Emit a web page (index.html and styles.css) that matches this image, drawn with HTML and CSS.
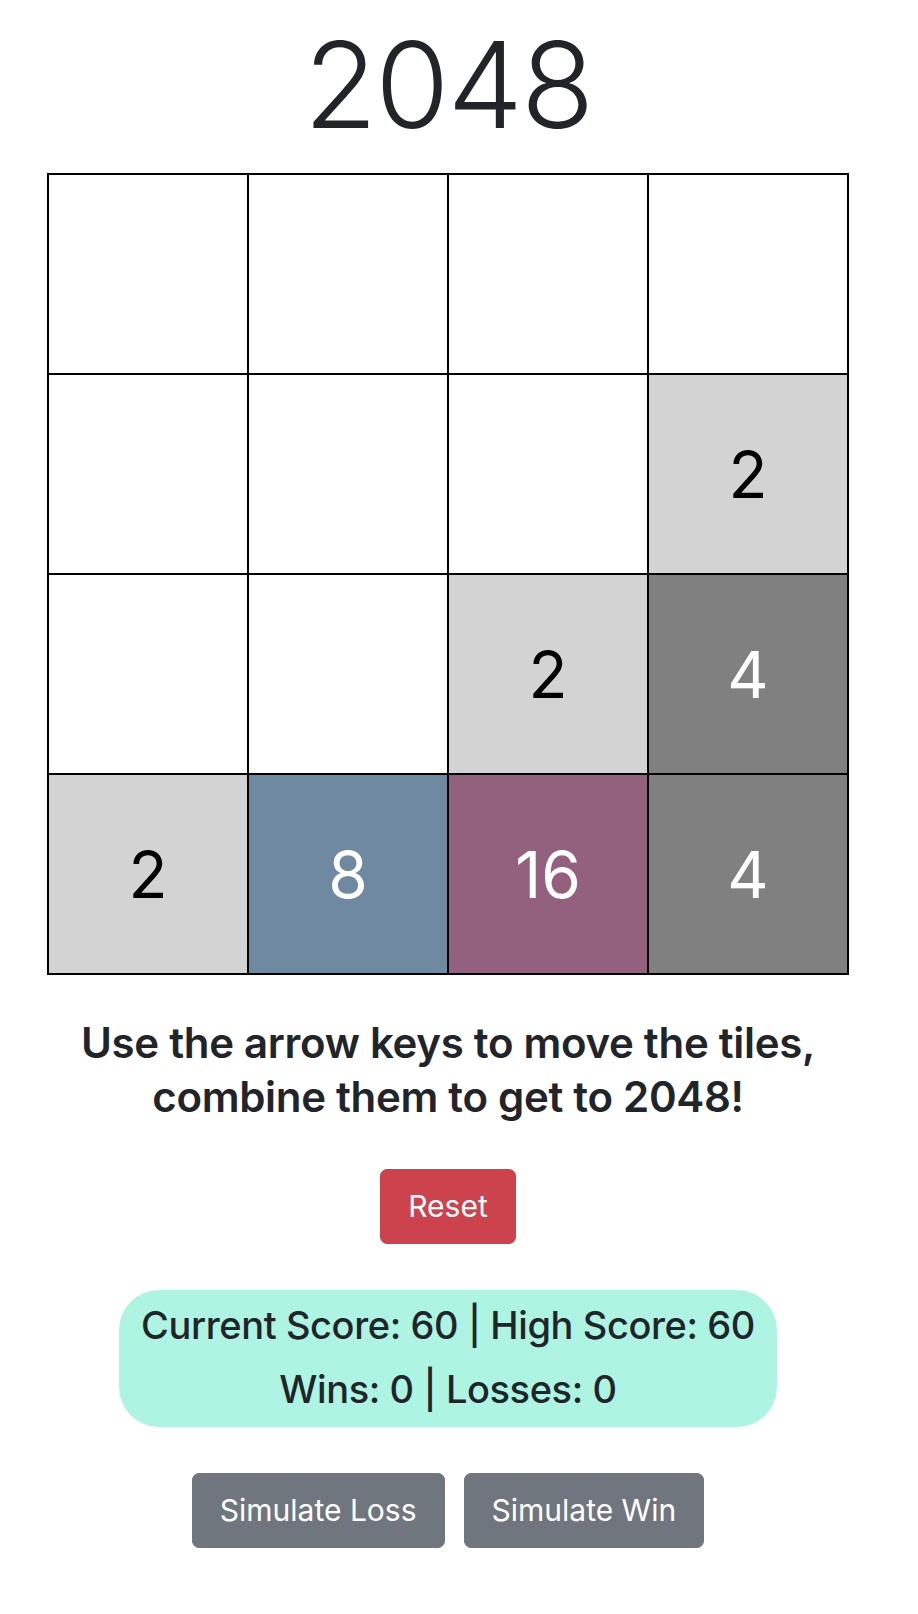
FILE: index.html
```html
<!DOCTYPE html>
<html lang="en">
<head>
<meta charset="utf-8">
<title>2048</title>
<link rel="stylesheet" href="styles.css">
</head>
<body>
<main class="page">
  <h1 class="title">2048</h1>
  <div class="board">
    <div class="cell"></div>
    <div class="cell"></div>
    <div class="cell"></div>
    <div class="cell"></div>
    <div class="cell"></div>
    <div class="cell"></div>
    <div class="cell"></div>
    <div class="cell t2">2</div>
    <div class="cell"></div>
    <div class="cell"></div>
    <div class="cell t2">2</div>
    <div class="cell t4">4</div>
    <div class="cell t2">2</div>
    <div class="cell t8">8</div>
    <div class="cell t16">16</div>
    <div class="cell t4">4</div>
  </div>
  <p class="hint">Use the arrow keys to move the tiles,<br>combine them to get to 2048!</p>
  <button class="btn btn-danger">Reset</button>
  <div class="score">
    <p class="score-line">Current Score: 60 | High Score: 60</p>
    <p class="score-line">Wins: 0 | Losses: 0</p>
  </div>
  <div class="actions">
    <button class="btn btn-secondary">Simulate Loss</button>
    <button class="btn btn-secondary">Simulate Win</button>
  </div>
</main>
</body>
</html>
```
FILE: styles.css
```css
html, body {
  margin: 0;
  padding: 0;
  background: #ffffff;
}
body {
  font-family: Inter, "Noto Sans", "Liberation Sans", sans-serif;
  color: #212529;
}
.page {
  width: 896px;
  display: flex;
  flex-direction: column;
  align-items: center;
}
.title {
  margin: 13px 0 0 0;
  font-size: 120px;
  line-height: 144px;
  font-weight: 300;
  letter-spacing: -2px;
}
.board {
  margin-top: 16px;
  display: grid;
  grid-template-columns: repeat(4, 200px);
  grid-template-rows: repeat(4, 200px);
  border: 1px solid #000;
}
.cell {
  border: 1px solid #000;
  background: #fff;
  display: flex;
  align-items: center;
  justify-content: center;
  font-size: 64px;
  font-weight: 400;
  color: #000;
}
.t2 { background: #d3d3d3; color: #000; }
.t4 { background: #808080; color: #fff; }
.t8 { background: #6e89a0; color: #fff; }
.t16 { background: #93617e; color: #fff; }
.hint {
  margin: 41px 0 0 0;
  font-size: 42px;
  line-height: 54px;
  font-weight: 600;
  text-align: center;
  letter-spacing: -0.3px;
}
.btn {
  font-family: inherit;
  font-size: 30px;
  line-height: 45px;
  font-weight: 400;
  color: #fff;
  padding: 14px 27px;
  border: 1px solid transparent;
  border-radius: 7px;
  cursor: pointer;
}
.btn-danger {
  margin-top: 45px;
  background: #cd434d;
  border-color: #cd434d;
}
.btn-secondary {
  background: #70767e;
  border-color: #70767e;
}
.score {
  margin-top: 46px;
  width: 658px;
  box-sizing: border-box;
  padding: 3px 10px 6px;
  background: #adf5e2;
  border-radius: 40px;
  text-align: center;
}
.score-line {
  margin: 0;
  font-size: 38px;
  line-height: 64px;
  font-weight: 500;
  letter-spacing: -0.4px;
  white-space: nowrap;
}
.actions {
  margin-top: 46px;
  display: flex;
  gap: 19px;
}
```
